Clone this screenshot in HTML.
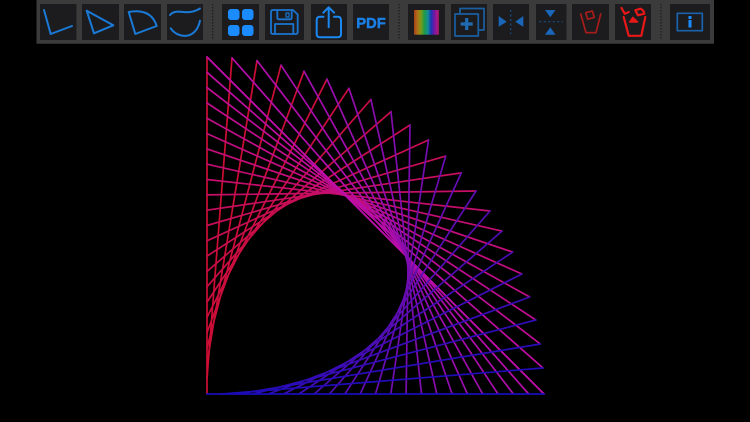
<!DOCTYPE html>
<html>
<head>
<meta charset="utf-8">
<style>
html,body{margin:0;padding:0;background:#000;width:750px;height:422px;overflow:hidden}
svg{position:absolute;left:0;top:0}
#art{filter:blur(.3px)}
</style>
</head>
<body>
<svg id="art" width="750" height="422" viewBox="0 0 750 422" fill="none" stroke-linecap="round"></svg>
<svg width="750" height="46" viewBox="0 0 750 46" fill="none" stroke-linejoin="round" stroke-linecap="round" style="filter:blur(.35px)">
<defs>
<linearGradient id="rb" x1="0" x2="1" y1="0" y2="0">
<stop offset="0" stop-color="#a8401c"/>
<stop offset=".14" stop-color="#b07018"/>
<stop offset=".28" stop-color="#7c9a18"/>
<stop offset=".42" stop-color="#1c9a48"/>
<stop offset=".56" stop-color="#148c98"/>
<stop offset=".68" stop-color="#1838b0"/>
<stop offset=".8" stop-color="#6a18a8"/>
<stop offset=".92" stop-color="#a81888"/>
<stop offset="1" stop-color="#901860"/>
</linearGradient>
</defs>
<rect x="36.500" y="0" width="677.500" height="44" fill="#3b3b3c"/>
<rect x="36.500" y="43" width="677.500" height="1" fill="#2c2c2c"/>
<g fill="#1c1c1e">
<rect x="40" y="4" width="36.500" height="36"/>
<rect x="82" y="4" width="37" height="36"/>
<rect x="124" y="4" width="37" height="36"/>
<rect x="167" y="4" width="36" height="36"/>
<rect x="222" y="4" width="37" height="36"/>
<rect x="265" y="4" width="39" height="36"/>
<rect x="311" y="4" width="36" height="36"/>
<rect x="353" y="4" width="36" height="36"/>
<rect x="408" y="4" width="37" height="36"/>
<rect x="451" y="4" width="36" height="36"/>
<rect x="493" y="4" width="36" height="36"/>
<rect x="536" y="4" width="30.500" height="36"/>
<rect x="572" y="4" width="37" height="36"/>
<rect x="615" y="4" width="36" height="36"/>
<rect x="670" y="4" width="40" height="36"/>
</g>
<g stroke="#161616" stroke-width="1" stroke-dasharray="1.500 1.500" stroke-linecap="butt">
<path d="M212.700 4V40M399 4V40M661 4V40"/>
</g>
<g stroke="#1a7ad8" stroke-width="2">
<path d="M44 10L50.700 34L72 26"/>
<path d="M86.700 10.700L94 33.300L113.300 25.300Z"/>
<path d="M128.700 12L135.300 34L156.700 26Q151 8 128.700 12Z"/>
<path d="M170 15C177 7 186 17 200 8.500"/>
<path d="M170.700 28.300C178 39 196 40 200 20.700"/>
</g>
<g fill="#1a8cff">
<rect x="228" y="9" width="11.500" height="11" rx="3"/>
<rect x="242" y="9" width="11.500" height="11" rx="3"/>
<rect x="228" y="25" width="11.500" height="11" rx="3"/>
<rect x="242" y="25" width="11.500" height="11" rx="3"/>
</g>
<g stroke="#1a74d0" stroke-width="1.800">
<path d="M273 10H293L297.700 14.500V32Q297.700 34 295.700 34H273Q271 34 271 32V12Q271 10 273 10Z"/>
<path d="M277.300 10.500V17.500Q277.300 19.300 279 19.300H290Q291.700 19.300 291.700 17.500V10.500"/>
<path d="M286 13H289V17H286Z" stroke-width="1.200"/>
<path d="M275 34V24H293.300V34"/>
</g>
<g stroke="#1a88f0" stroke-width="2">
<path d="M323.500 16.700H320Q316.700 16.700 316.700 20V34Q316.700 37.300 320 37.300H337.700Q341 37.300 341 34V20Q341 16.700 337.700 16.700H334"/>
<path d="M328.700 27.300V7.500M323.300 12.700L328.700 7.300L334.100 12.700"/>
</g>
<text x="371" y="28" font-family="'Liberation Sans',sans-serif" font-weight="700" font-size="14.800" fill="#1a80e8" stroke="#1a80e8" stroke-width=".4" text-anchor="middle">PDF</text>
<rect x="414" y="10" width="25" height="24.700" fill="url(#rb)"/>
<g stroke="#1a5fa2" stroke-width="1.700">
<rect x="455" y="14" width="23.300" height="22"/>
<path d="M460 14V8.500H484V30H478.300"/>
</g>
<path d="M466.700 18V30M460.700 24H472.700" stroke="#1f6cb4" stroke-width="3.200" stroke-linecap="butt"/>
<g fill="#1a66b8">
<path d="M498.700 16L506.700 21.700L498.700 26.700Z"/>
<path d="M523.300 16L515.300 21.700L523.300 26.700Z"/>
<path d="M545 10H555.500L550.300 17.300Z"/>
<path d="M545 34.700H555.500L550.300 27.300Z"/>
</g>
<path d="M510.700 10V34" stroke="#174e88" stroke-width="1.200" stroke-dasharray="2 2.500" stroke-linecap="butt"/>
<path d="M539.300 21.700H563" stroke="#174e88" stroke-width="1.200" stroke-dasharray="2 2.500" stroke-linecap="butt"/>
<g stroke="#a81c1c" stroke-width="1.700">
<path d="M580.700 14L586 32.700H596L600.700 14"/>
<path d="M585.700 12.700L592.300 11L594.300 17.300L587.700 19.300Z"/>
</g>
<g stroke="#e81818" stroke-width="2.200">
<path d="M623.700 17L628.700 35.800H641.300L645.300 17"/>
<path d="M621.500 8L624.700 13.700L628.700 12"/>
<path d="M635.300 10.300L640.300 8.700Q643.800 10 644.300 13.700L638 15.300Z"/>
<path d="M629.800 22L632.900 17.500L637.500 22Z" fill="#e81818" stroke-width="1.600"/>
</g>
<rect x="677.300" y="13.300" width="25" height="17.400" stroke="#1a62ac" stroke-width="1.700"/>
<rect x="688.500" y="16" width="3" height="3" fill="#1a8cff"/>
<rect x="688.500" y="20" width="3" height="7.500" fill="#1a8cff"/>
</svg>
<script>
(function(){
var s=document.getElementById('art'),cx=207,cy=394,R=337,N=22;
var ang=[0,4.25,8.53,12.69,16.73,20.86,24.9,29.1,33.1,37.05,41.1,45.1,49,52.95,57.1,61.1,65.1,69.14,73.27,77.31,81.47,85.57,90];
function mix(a,b,t){return 'rgb('+a.map(function(v,k){return Math.round(v+(b[k]-v)*t)}).join(',')+')'}
var red=[204,14,50],mag=[190,14,170],blu=[24,12,184];
var a='',b='';
for(var i=0;i<=N;i++){
 var t=i/N,th=ang[i]*Math.PI/180,x=cx+R*Math.sin(th),y=cy-R*Math.cos(th);
 a+='<line x1="'+x.toFixed(1)+'" y1="'+y.toFixed(1)+'" x2="'+cx+'" y2="'+(cy-R*t).toFixed(1)+'" stroke="'+mix(red,mag,Math.pow(t,1.6))+'" stroke-width="1.700"/>';
 b+='<line x1="'+x.toFixed(1)+'" y1="'+y.toFixed(1)+'" x2="'+(cx+R*(1-t)).toFixed(1)+'" y2="'+cy+'" stroke="'+mix(mag,blu,t)+'" stroke-width="1.700"/>';
}
s.innerHTML=a+b;
})();
</script>
</body>
</html>
